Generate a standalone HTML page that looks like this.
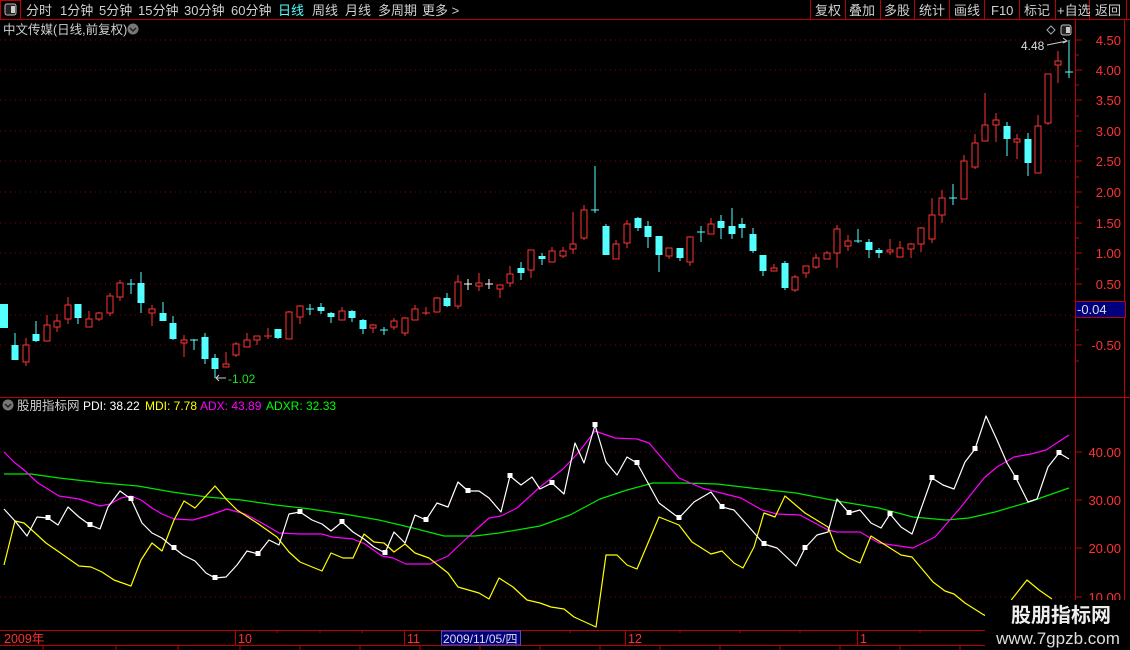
<!DOCTYPE html>
<html><head><meta charset="utf-8">
<style>
html,body{margin:0;padding:0;background:#000;width:1130px;height:650px;overflow:hidden}
svg{display:block}
text{font-family:"Liberation Sans","Noto Sans CJK SC",sans-serif}
</style></head><body>
<svg width="1130" height="650" viewBox="0 0 1130 650" xmlns="http://www.w3.org/2000/svg">
<rect width="1130" height="650" fill="#000"/>
<!-- toolbar -->
<line x1="0" y1="19.5" x2="1130" y2="19.5" stroke="#c00000"/>
<rect x="0.5" y="0.5" width="20" height="19" fill="none" stroke="#c00000"/>
<rect x="5" y="4" width="11" height="11" rx="2" fill="#222" stroke="#bbb"/>
<rect x="11" y="6" width="4" height="7" fill="#ccc"/>
<g font-size="13" fill="#d0d0d0">
<text x="26" y="15">分时</text><text x="60" y="15">1分钟</text><text x="99" y="15">5分钟</text>
<text x="138" y="15">15分钟</text><text x="184" y="15">30分钟</text><text x="231" y="15">60分钟</text>
<text x="278" y="15" fill="#54ffff">日线</text><text x="312" y="15">周线</text><text x="345" y="15">月线</text>
<text x="378" y="15">多周期</text><text x="422" y="15">更多 &gt;</text>
</g>
<g stroke="#c00000"><line x1="810.5" y1="0" x2="810.5" y2="19"/><line x1="845.5" y1="0" x2="845.5" y2="19"/><line x1="880.5" y1="0" x2="880.5" y2="19"/><line x1="914.5" y1="0" x2="914.5" y2="19"/><line x1="949.5" y1="0" x2="949.5" y2="19"/><line x1="984.5" y1="0" x2="984.5" y2="19"/><line x1="1019.5" y1="0" x2="1019.5" y2="19"/><line x1="1055.5" y1="0" x2="1055.5" y2="19"/><line x1="1089.5" y1="0" x2="1089.5" y2="19"/><line x1="1126.5" y1="0" x2="1126.5" y2="19"/></g>
<g font-size="13" fill="#d0d0d0">
<text x="815" y="15">复权</text><text x="849" y="15">叠加</text><text x="884" y="15">多股</text><text x="919" y="15">统计</text><text x="954" y="15">画线</text><text x="991" y="15">F10</text><text x="1024" y="15">标记</text><text x="1057" y="15">+自选</text><text x="1095" y="15">返回</text>
</g>
<!-- title -->
<text x="3" y="34" font-size="12.5" fill="#cfcfcf">中文传媒(日线,前复权)</text>
<circle cx="133" cy="29" r="5.5" fill="#777"/><path d="M130 28l3 3 3-3" stroke="#222" stroke-width="1.5" fill="none"/>
<path d="M1047 30l4-4 4 4-4 4z" fill="none" stroke="#aaa"/>
<rect x="1061" y="25" width="10" height="10" rx="2" fill="#222" stroke="#bbb"/><rect x="1066" y="27" width="4" height="6" fill="#ccc"/>
<!-- main grid -->
<g stroke="#8a0000" stroke-dasharray="1,4" shape-rendering="crispEdges">
<line x1="0" y1="40" x2="1075" y2="40"/><line x1="0" y1="70" x2="1075" y2="70"/><line x1="0" y1="100" x2="1075" y2="100"/><line x1="0" y1="131" x2="1075" y2="131"/><line x1="0" y1="161" x2="1075" y2="161"/><line x1="0" y1="192" x2="1075" y2="192"/><line x1="0" y1="223" x2="1075" y2="223"/><line x1="0" y1="253" x2="1075" y2="253"/><line x1="0" y1="284" x2="1075" y2="284"/><line x1="0" y1="315" x2="1075" y2="315"/><line x1="0" y1="345" x2="1075" y2="345"/>
</g>
<!-- axes -->
<line x1="1075.5" y1="20" x2="1075.5" y2="630" stroke="#c00000"/>
<line x1="1124.5" y1="20" x2="1124.5" y2="630" stroke="#c00000"/>
<line x1="0" y1="397.5" x2="1130" y2="397.5" stroke="#c00000"/>
<g stroke="#c00000" shape-rendering="crispEdges">
<line x1="1075" y1="40" x2="1082" y2="40"/><line x1="1075" y1="70" x2="1082" y2="70"/><line x1="1075" y1="100" x2="1082" y2="100"/><line x1="1075" y1="131" x2="1082" y2="131"/><line x1="1075" y1="161" x2="1082" y2="161"/><line x1="1075" y1="192" x2="1082" y2="192"/><line x1="1075" y1="223" x2="1082" y2="223"/><line x1="1075" y1="253" x2="1082" y2="253"/><line x1="1075" y1="284" x2="1082" y2="284"/><line x1="1075" y1="345" x2="1082" y2="345"/>
<line x1="1075" y1="55" x2="1079" y2="55"/><line x1="1075" y1="85" x2="1079" y2="85"/><line x1="1075" y1="116" x2="1079" y2="116"/><line x1="1075" y1="146" x2="1079" y2="146"/><line x1="1075" y1="177" x2="1079" y2="177"/><line x1="1075" y1="207" x2="1079" y2="207"/><line x1="1075" y1="238" x2="1079" y2="238"/><line x1="1075" y1="269" x2="1079" y2="269"/><line x1="1075" y1="330" x2="1079" y2="330"/><line x1="1075" y1="361" x2="1079" y2="361"/>
<line x1="1075" y1="452" x2="1082" y2="452"/><line x1="1075" y1="500" x2="1082" y2="500"/><line x1="1075" y1="548" x2="1082" y2="548"/><line x1="1075" y1="597" x2="1082" y2="597"/>
</g>
<g font-size="13" fill="#ff3232" text-anchor="end">
<text x="1121" y="45">4.50</text><text x="1121" y="75">4.00</text><text x="1121" y="105">3.50</text><text x="1121" y="136">3.00</text><text x="1121" y="166">2.50</text><text x="1121" y="197">2.00</text><text x="1121" y="228">1.50</text><text x="1121" y="258">1.00</text><text x="1121" y="289">0.50</text><text x="1121" y="350">-0.50</text>
<text x="1121" y="457">40.00</text><text x="1121" y="505">30.00</text><text x="1121" y="553">20.00</text><text x="1121" y="602">10.00</text>
</g>
<rect x="1075.5" y="301.5" width="50" height="16" fill="#00007f" stroke="#c00000"/>
<text x="1077" y="314" font-size="13" fill="#ddd">-0.04</text>
<!-- candles: wicks -->
<g stroke-width="1" shape-rendering="crispEdges">
<g stroke="#54ffff">
<line x1="15" y1="333" x2="15" y2="360"/><line x1="36" y1="321" x2="36" y2="342"/><line x1="78" y1="304" x2="78" y2="324"/><line x1="131" y1="279" x2="131" y2="294"/><line x1="127" y1="284" x2="135" y2="284"/><line x1="141" y1="272" x2="141" y2="313"/><line x1="163" y1="302" x2="163" y2="321"/><line x1="173" y1="316" x2="173" y2="340"/><line x1="194" y1="339" x2="194" y2="350"/><line x1="190" y1="340" x2="198" y2="340"/><line x1="205" y1="333" x2="205" y2="364"/><line x1="215" y1="354" x2="215" y2="378"/><line x1="278" y1="329" x2="278" y2="339"/><line x1="310" y1="304" x2="310" y2="315"/><line x1="306" y1="309" x2="314" y2="309"/><line x1="321" y1="303" x2="321" y2="314"/><line x1="331" y1="312" x2="331" y2="323"/><line x1="352" y1="310" x2="352" y2="322"/><line x1="363" y1="319" x2="363" y2="334"/><line x1="384" y1="327" x2="384" y2="335"/><line x1="380" y1="330" x2="388" y2="330"/><line x1="447" y1="293" x2="447" y2="307"/><line x1="521" y1="262" x2="521" y2="280"/><line x1="542" y1="253" x2="542" y2="265"/><line x1="595" y1="166" x2="595" y2="213"/><line x1="591" y1="210" x2="599" y2="210"/><line x1="606" y1="224" x2="606" y2="255"/><line x1="638" y1="217" x2="638" y2="231"/><line x1="648" y1="221" x2="648" y2="248"/><line x1="659" y1="236" x2="659" y2="272"/><line x1="680" y1="248" x2="680" y2="261"/><line x1="701" y1="226" x2="701" y2="242"/><line x1="697" y1="232" x2="705" y2="232"/><line x1="721" y1="215" x2="721" y2="239"/><line x1="732" y1="208" x2="732" y2="239"/><line x1="742" y1="218" x2="742" y2="238"/><line x1="753" y1="228" x2="753" y2="253"/><line x1="763" y1="255" x2="763" y2="276"/><line x1="785" y1="261" x2="785" y2="290"/><line x1="858" y1="229" x2="858" y2="243"/><line x1="854" y1="241" x2="862" y2="241"/><line x1="869" y1="239" x2="869" y2="258"/><line x1="879" y1="248" x2="879" y2="258"/><line x1="953" y1="184" x2="953" y2="205"/><line x1="949" y1="198" x2="957" y2="198"/><line x1="1007" y1="122" x2="1007" y2="156"/><line x1="1028" y1="133" x2="1028" y2="176"/><line x1="1069" y1="40" x2="1069" y2="78"/><line x1="1065" y1="72" x2="1073" y2="72"/>
</g>
<g stroke="#fff"><line x1="468" y1="279" x2="468" y2="290"/><line x1="464" y1="284" x2="472" y2="284"/><line x1="489" y1="279" x2="489" y2="289"/><line x1="485" y1="284" x2="493" y2="284"/></g>
<g stroke="#ff3232">
<line x1="26" y1="338" x2="26" y2="366"/><line x1="47" y1="315" x2="47" y2="341"/><line x1="57" y1="314" x2="57" y2="332"/><line x1="68" y1="297" x2="68" y2="324"/><line x1="89" y1="311" x2="89" y2="327"/><line x1="99" y1="312" x2="99" y2="321"/><line x1="110" y1="293" x2="110" y2="316"/><line x1="120" y1="280" x2="120" y2="301"/><line x1="152" y1="305" x2="152" y2="326"/><line x1="184" y1="335" x2="184" y2="357"/><line x1="226" y1="352" x2="226" y2="367"/><line x1="236" y1="342" x2="236" y2="357"/><line x1="247" y1="333" x2="247" y2="347"/><line x1="257" y1="336" x2="257" y2="345"/><line x1="268" y1="328" x2="268" y2="339"/><line x1="264" y1="336" x2="272" y2="336"/><line x1="289" y1="311" x2="289" y2="339"/><line x1="300" y1="305" x2="300" y2="324"/><line x1="342" y1="307" x2="342" y2="320"/><line x1="373" y1="324" x2="373" y2="333"/><line x1="394" y1="318" x2="394" y2="330"/><line x1="405" y1="317" x2="405" y2="336"/><line x1="415" y1="305" x2="415" y2="320"/><line x1="426" y1="307" x2="426" y2="315"/><line x1="422" y1="313" x2="430" y2="313"/><line x1="437" y1="297" x2="437" y2="312"/><line x1="458" y1="275" x2="458" y2="309"/><line x1="479" y1="273" x2="479" y2="291"/><line x1="500" y1="285" x2="500" y2="298"/><line x1="510" y1="266" x2="510" y2="287"/><line x1="531" y1="250" x2="531" y2="278"/><line x1="552" y1="247" x2="552" y2="262"/><line x1="563" y1="247" x2="563" y2="258"/><line x1="573" y1="212" x2="573" y2="254"/><line x1="584" y1="205" x2="584" y2="240"/><line x1="616" y1="240" x2="616" y2="259"/><line x1="627" y1="220" x2="627" y2="248"/><line x1="669" y1="248" x2="669" y2="259"/><line x1="690" y1="236" x2="690" y2="266"/><line x1="711" y1="218" x2="711" y2="234"/><line x1="774" y1="264" x2="774" y2="271"/><line x1="795" y1="275" x2="795" y2="292"/><line x1="806" y1="266" x2="806" y2="278"/><line x1="816" y1="254" x2="816" y2="269"/><line x1="827" y1="251" x2="827" y2="259"/><line x1="837" y1="225" x2="837" y2="268"/><line x1="848" y1="235" x2="848" y2="251"/><line x1="890" y1="239" x2="890" y2="255"/><line x1="900" y1="241" x2="900" y2="257"/><line x1="911" y1="243" x2="911" y2="258"/><line x1="921" y1="227" x2="921" y2="252"/><line x1="932" y1="198" x2="932" y2="243"/><line x1="942" y1="190" x2="942" y2="223"/><line x1="964" y1="155" x2="964" y2="199"/><line x1="975" y1="134" x2="975" y2="169"/><line x1="985" y1="93" x2="985" y2="141"/><line x1="996" y1="113" x2="996" y2="142"/><line x1="1017" y1="134" x2="1017" y2="159"/><line x1="1038" y1="115" x2="1038" y2="173"/><line x1="1048" y1="74" x2="1048" y2="125"/><line x1="1058" y1="51" x2="1058" y2="83"/>
</g>
</g>
<!-- cyan bodies -->
<g fill="#54ffff" shape-rendering="crispEdges">
<rect x="0" y="304" width="8" height="24"/><rect x="11.5" y="345" width="7" height="15"/><rect x="32.5" y="334" width="7" height="7"/><rect x="74.5" y="304" width="7" height="14"/><rect x="137.5" y="283" width="7" height="20"/><rect x="159.5" y="313" width="7" height="8"/><rect x="169.5" y="323" width="7" height="16"/><rect x="201.5" y="337" width="7" height="22"/><rect x="211.5" y="358" width="7" height="11"/><rect x="274.5" y="329" width="7" height="9"/><rect x="317.5" y="307" width="7" height="4"/><rect x="327.5" y="313" width="7" height="4"/><rect x="348.5" y="311" width="7" height="7"/><rect x="359.5" y="320" width="7" height="9"/><rect x="443.5" y="298" width="7" height="8"/><rect x="517.5" y="268" width="7" height="5"/><rect x="538.5" y="256" width="7" height="3"/><rect x="602.5" y="226" width="7" height="29"/><rect x="634.5" y="218" width="7" height="10"/><rect x="644.5" y="226" width="7" height="11"/><rect x="655.5" y="236" width="7" height="19"/><rect x="676.5" y="248" width="7" height="10"/><rect x="717.5" y="221" width="7" height="7"/><rect x="728.5" y="226" width="7" height="8"/><rect x="738.5" y="224" width="7" height="4"/><rect x="749.5" y="234" width="7" height="17"/><rect x="759.5" y="255" width="7" height="16"/><rect x="781.5" y="263" width="7" height="25"/><rect x="865.5" y="242" width="7" height="8"/><rect x="875.5" y="250" width="7" height="3"/><rect x="1003.5" y="126" width="7" height="13"/><rect x="1024.5" y="139" width="7" height="24"/>
</g>
<!-- red bodies -->
<g fill="#000" stroke="#ff3232" stroke-width="1" shape-rendering="crispEdges">
<rect x="23" y="345" width="6" height="17"/><rect x="44" y="325" width="6" height="16"/><rect x="54" y="321" width="6" height="6"/><rect x="65" y="305" width="6" height="14"/><rect x="86" y="319" width="6" height="8"/><rect x="96" y="313" width="6" height="6"/><rect x="107" y="296" width="6" height="17"/><rect x="117" y="283" width="6" height="14"/><rect x="149" y="309" width="6" height="4"/><rect x="181" y="340" width="6" height="3"/><rect x="223" y="364" width="6" height="3"/><rect x="233" y="344" width="6" height="11"/><rect x="244" y="340" width="6" height="7"/><rect x="254" y="336" width="6" height="4"/><rect x="286" y="312" width="6" height="27"/><rect x="297" y="306" width="6" height="11"/><rect x="339" y="311" width="6" height="9"/><rect x="370" y="325" width="6" height="3"/><rect x="391" y="321" width="6" height="6"/><rect x="402" y="318" width="6" height="15"/><rect x="412" y="309" width="6" height="11"/><rect x="434" y="298" width="6" height="14"/><rect x="455" y="282" width="6" height="24"/><rect x="476" y="283" width="6" height="3"/><rect x="497" y="285" width="6" height="4"/><rect x="507" y="274" width="6" height="9"/><rect x="528" y="250" width="6" height="20"/><rect x="549" y="251" width="6" height="11"/><rect x="560" y="251" width="6" height="5"/><rect x="570" y="244" width="6" height="5"/><rect x="581" y="210" width="6" height="28"/><rect x="613" y="244" width="6" height="15"/><rect x="624" y="224" width="6" height="19"/><rect x="666" y="248" width="6" height="8"/><rect x="687" y="237" width="6" height="25"/><rect x="708" y="224" width="6" height="10"/><rect x="771" y="268" width="6" height="3"/><rect x="792" y="277" width="6" height="13"/><rect x="803" y="266" width="6" height="7"/><rect x="813" y="258" width="6" height="9"/><rect x="824" y="253" width="6" height="6"/><rect x="834" y="229" width="6" height="24"/><rect x="845" y="241" width="6" height="5"/><rect x="887" y="250" width="6" height="2"/><rect x="897" y="248" width="6" height="9"/><rect x="908" y="244" width="6" height="5"/><rect x="918" y="228" width="6" height="16"/><rect x="929" y="215" width="6" height="24"/><rect x="939" y="198" width="6" height="17"/><rect x="961" y="161" width="6" height="38"/><rect x="972" y="143" width="6" height="24"/><rect x="982" y="125" width="6" height="16"/><rect x="993" y="120" width="6" height="5"/><rect x="1014" y="139" width="6" height="3"/><rect x="1035" y="126" width="6" height="47"/><rect x="1045" y="74" width="6" height="49"/><rect x="1055" y="61" width="6" height="4"/>
</g>
<!-- markers -->
<path d="M216 378h10M219 375l-3 3 3 3" stroke="#ccc" fill="none"/>
<text x="228" y="383" font-size="12" fill="#1ee61e">-1.02</text>
<text x="1021" y="50" font-size="12" fill="#ddd">4.48</text>
<path d="M1047 45l20-4M1063 38l4 3-4 2" stroke="#ccc" fill="none"/>
<!-- indicator -->
<circle cx="8" cy="405" r="5.5" fill="#777"/><path d="M5 404l3 3 3-3" stroke="#222" stroke-width="1.5" fill="none"/>
<text x="17" y="410" font-size="12.5" fill="#cfcfcf">股朋指标网</text>
<text x="83" y="410" font-size="12" fill="#fff">PDI: 38.22</text>
<text x="145" y="410" font-size="12" fill="#ffff00">MDI: 7.78</text>
<text x="200" y="410" font-size="12" fill="#ff00ff">ADX: 43.89</text>
<text x="266" y="410" font-size="12" fill="#00ff00">ADXR: 32.33</text>
<g stroke="#8a0000" stroke-dasharray="1,4" shape-rendering="crispEdges">
<line x1="0" y1="452" x2="1075" y2="452"/><line x1="0" y1="500" x2="1075" y2="500"/><line x1="0" y1="548" x2="1075" y2="548"/><line x1="0" y1="597" x2="1075" y2="597"/>
</g>
<g fill="none" stroke-width="1.2" stroke-linejoin="round">
<polyline stroke="#00e600" points="4,474 31,474 59,478 103,483 138,486 172,492 207,497 241,500 276,505 310,509 344,514 379,520 413,528 444,536 475,536 499,533 540,526 570,515 600,499 627,490 653,483 683,483 717,484 751,488 796,493 837,501 879,508 913,517 946,520 969,518 995,512 1029,502 1069,488"/>
<polyline stroke="#ff00ff" points="4,452 14,462 24,470 38,483 59,496 79,499 100,506 110,504 121,498 131,496 141,500 152,508 162,514 174,519 193,520 210,515 227,509 245,514 262,523 279,533 300,534 322,534 332,537 353,539 365,544 382,556 393,558 406,564 430,564 448,556 468,537 489,518 501,516 517,508 540,487 563,469 578,453 595,431 615,438 637,439 649,443 679,478 702,488 717,492 741,498 762,510 777,514 800,515 828,530 837,532 860,532 879,543 913,548 935,537 961,507 984,478 997,467 1014,457 1031,454 1046,450 1069,435"/>
<polyline stroke="#ffff00" points="4,565 15,521 24,523 34,532 46,543 59,552 69,559 79,566 91,567 102,572 114,580 131,586 141,560 152,543 162,551 174,520 184,501 195,508 215,486 227,500 237,510 257,523 277,537 289,552 300,562 322,571 331,553 343,558 353,558 364,534 374,542 384,543 394,552 405,544 415,553 429,558 448,573 458,587 479,593 489,599 499,578 513,587 527,600 540,603 551,607 564,609 574,617 596,627 606,555 617,555 627,565 637,569 659,517 679,525 692,542 711,554 722,551 734,563 743,568 754,547 764,513 775,517 785,496 805,513 828,527 837,550 849,558 860,563 871,536 890,548 901,555 912,557 933,582 945,591 954,594 965,603 984,615 1000,620 1012,599 1027,580 1039,590 1052,599"/>
<polyline stroke="#fff" points="4,509 15,521 27,536 37,517 48,518 58,525 68,507 79,517 90,525 100,529 108,507 120,491 131,499 142,523 152,533 162,538 174,548 183,555 195,561 206,573 215,578 226,577 237,565 247,551 258,554 269,540 279,545 289,514 300,512 312,520 322,524 331,531 342,522 353,532 364,539 374,547 385,553 394,532 405,543 415,515 426,520 437,503 448,507 458,482 468,491 479,491 489,498 501,512 510,476 521,485 532,477 540,489 552,483 564,494 575,443 584,463 595,425 606,462 617,475 627,457 637,463 659,503 679,518 694,502 711,492 722,507 734,510 764,544 777,548 796,566 805,548 817,535 828,532 837,499 849,513 860,510 871,523 881,528 890,514 901,527 912,534 932,478 943,485 954,489 965,462 975,449 986,416 997,440 1007,463 1016,478 1028,502 1037,499 1048,467 1059,453 1069,459"/>
</g>
<g fill="#fff" shape-rendering="crispEdges">
<rect x="45.5" y="515" width="5" height="5"/><rect x="87.5" y="522" width="5" height="5"/><rect x="128.5" y="496" width="5" height="5"/><rect x="171.5" y="545" width="5" height="5"/><rect x="212.5" y="575" width="5" height="5"/><rect x="255.5" y="551" width="5" height="5"/><rect x="297.5" y="509" width="5" height="5"/><rect x="339.5" y="519" width="5" height="5"/><rect x="382.5" y="550" width="5" height="5"/><rect x="423.5" y="517" width="5" height="5"/><rect x="465.5" y="488" width="5" height="5"/><rect x="507.5" y="473" width="5" height="5"/><rect x="549.5" y="480" width="5" height="5"/><rect x="592.5" y="422" width="5" height="5"/><rect x="634.5" y="460" width="5" height="5"/><rect x="676.5" y="515" width="5" height="5"/><rect x="719.5" y="504" width="5" height="5"/><rect x="761.5" y="541" width="5" height="5"/><rect x="802.5" y="545" width="5" height="5"/><rect x="846.5" y="510" width="5" height="5"/><rect x="887.5" y="511" width="5" height="5"/><rect x="929.5" y="475" width="5" height="5"/><rect x="972.5" y="446" width="5" height="5"/><rect x="1013.5" y="475" width="5" height="5"/><rect x="1056.5" y="450" width="5" height="5"/>
</g>
<!-- bottom axis -->
<line x1="0" y1="630.5" x2="1130" y2="630.5" stroke="#c00000"/>
<line x1="0" y1="645.5" x2="1130" y2="645.5" stroke="#c00000"/>
<g stroke="#c00000" shape-rendering="crispEdges">
<line x1="235.5" y1="630" x2="235.5" y2="645"/><line x1="404.5" y1="630" x2="404.5" y2="645"/><line x1="625.5" y1="630" x2="625.5" y2="645"/><line x1="857.5" y1="630" x2="857.5" y2="645"/>
<line x1="277" y1="630" x2="277" y2="633"/><line x1="320" y1="630" x2="320" y2="633"/><line x1="362" y1="630" x2="362" y2="633"/><line x1="570" y1="630" x2="570" y2="633"/><line x1="680" y1="630" x2="680" y2="633"/><line x1="740" y1="630" x2="740" y2="633"/><line x1="800" y1="630" x2="800" y2="633"/><line x1="920" y1="630" x2="920" y2="633"/>
<line x1="43" y1="645" x2="43" y2="650"/><line x1="116" y1="645" x2="116" y2="650"/><line x1="178" y1="645" x2="178" y2="650"/><line x1="240" y1="645" x2="240" y2="650"/><line x1="300" y1="645" x2="300" y2="650"/><line x1="360" y1="645" x2="360" y2="650"/><line x1="420" y1="645" x2="420" y2="650"/><line x1="480" y1="645" x2="480" y2="650"/><line x1="540" y1="645" x2="540" y2="650"/><line x1="600" y1="645" x2="600" y2="650"/><line x1="660" y1="645" x2="660" y2="650"/><line x1="720" y1="645" x2="720" y2="650"/><line x1="780" y1="645" x2="780" y2="650"/><line x1="840" y1="645" x2="840" y2="650"/><line x1="900" y1="645" x2="900" y2="650"/><line x1="960" y1="645" x2="960" y2="650"/>
</g>
<g font-size="12.5" fill="#ff3232">
<text x="4" y="643">2009年</text><text x="238" y="643">10</text><text x="407" y="643">11</text><text x="628" y="643">12</text><text x="860" y="643">1</text>
</g>
<rect x="441.5" y="631" width="79" height="14" fill="#00007f" stroke="#5050c0"/>
<text x="443" y="643" font-size="12" fill="#ddd">2009/11/05/四</text>
<!-- watermark -->
<rect x="985" y="600" width="145" height="50" fill="#000"/>
<text x="1061" y="622" font-size="20" font-weight="bold" fill="#eee" text-anchor="middle">股朋指标网</text>
<text x="1058" y="644" font-size="17" fill="#ddd" text-anchor="middle">www.7gpzb.com</text>
</svg>
</body></html>
